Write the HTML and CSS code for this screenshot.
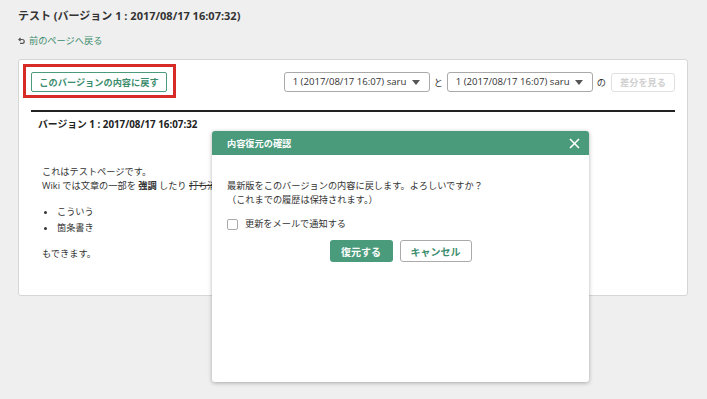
FILE: index.html
```html
<!DOCTYPE html>
<html lang="ja">
  <head>
    <meta charset="UTF-8" />
    <meta name="viewport" content="width=device-width, initial-scale=1.0" />
    <title>テスト (バージョン 1)</title>
    <link rel="stylesheet" href="styles.css">
  </head>
  <body>
    <div class="page">
      <h1 class="page-title">テスト (バージョン 1 : 2017/08/17 16:07:32)</h1>
      <a class="back-link" href="#">
        <svg width="7" height="8" viewBox="0 0 7 8" fill="none" stroke="#555" stroke-width="1.2">
          <polyline points="2.6 0.8 0.9 2.5 2.6 4.2"></polyline>
          <path d="M1 2.5 H4.3 A1.9 1.9 0 0 1 4.3 6.3 H2"></path>
        </svg>
        前のページへ戻る
      </a>

      <div class="panel">
        <div class="toolbar">
          <div class="highlight">
            <button class="btn-outline">このバージョンの内容に戻す</button>
          </div>
          <div class="compare">
            <div class="select">1 (2017/08/17 16:07) saru<span class="caret"></span></div>
            <span class="joiner">と</span>
            <div class="select">1 (2017/08/17 16:07) saru<span class="caret"></span></div>
            <span class="joiner">の</span>
            <button class="btn-disabled" disabled>差分を見る</button>
          </div>
        </div>

        <div class="revision">
          <h2 class="revision-title">バージョン 1 : 2017/08/17 16:07:32</h2>
          <div class="wiki">
            <p>これはテストページです。<br>Wiki では文章の一部を <strong>強調</strong> したり <s>打ち消し</s></p>
            <ul>
              <li>こういう</li>
              <li>箇条書き</li>
            </ul>
            <p>もできます。</p>
          </div>
        </div>
      </div>

      <div class="modal">
        <div class="modal-header">
          <span class="modal-title">内容復元の確認</span>
          <svg class="modal-close" width="11" height="11" viewBox="0 0 11 11" stroke="#fff" stroke-width="1.6">
            <line x1="1" y1="1" x2="10" y2="10"></line>
            <line x1="10" y1="1" x2="1" y2="10"></line>
          </svg>
        </div>
        <div class="modal-body">
          <p class="modal-text">最新版をこのバージョンの内容に戻します。よろしいですか？<br>（これまでの履歴は保持されます。）</p>
          <label class="check-row"><span class="checkbox"></span>更新をメールで通知する</label>
          <div class="modal-actions">
            <button class="btn-primary">復元する</button>
            <button class="btn-cancel">キャンセル</button>
          </div>
        </div>
      </div>
    </div>
  </body>
</html>
```

FILE: styles.css
```css
body {
  margin: 0;
  background-color: #efefef;
  font-family: "Open Sans", "Noto Sans CJK JP", sans-serif;
  font-size: 9.2px;
  color: #333;
}
.page {
  position: relative;
  padding: 8px 19px 0 18px;
  height: 391px;
}
.page-title {
  font-size: 11px;
  font-weight: bold;
  line-height: 16px;
  margin: 0;
  color: #333;
}
.back-link {
  display: flex;
  align-items: center;
  gap: 4px;
  margin-top: 10px;
  line-height: 14px;
  color: #3c8d6e;
  text-decoration: none;
  width: max-content;
}
.panel {
  margin-top: 11px;
  background-color: white;
  border: 1px solid #d6d6d6;
  border-radius: 3px;
  height: 237px;
  padding: 12px 12px 0 12px;
  box-sizing: border-box;
}
.toolbar {
  display: flex;
  justify-content: space-between;
  align-items: center;
  height: 20px;
}
button {
  font-family: inherit;
  font-size: 9.2px;
  font-weight: bold;
  cursor: pointer;
  box-sizing: border-box;
}
.highlight {
  display: flex;
  border: 3px solid #d62b27;
  padding: 5px 6px 3px 5px;
  margin: -8px 0 -6px -8px;
}
.btn-outline {
  height: 20px;
  width: 136px;
  padding: 0;
  background-color: white;
  color: #3c8d6e;
  border: 1.5px solid #4a9b7c;
  border-radius: 2px;
}
.compare {
  display: flex;
  align-items: center;
}
.select {
  position: relative;
  width: 146px;
  height: 20px;
  box-sizing: border-box;
  border: 1px solid #a9a9a9;
  border-radius: 3px;
  padding-left: 8px;
  font-size: 9.6px;
  line-height: 18px;
  color: #333;
}
.caret {
  position: absolute;
  right: 9px;
  top: 7px;
  border-left: 4px solid transparent;
  border-right: 4px solid transparent;
  border-top: 5px solid #555;
}
.joiner {
  margin: 0 4px;
  color: #333;
}
.btn-disabled {
  width: 64px;
  height: 19px;
  margin-left: 1px;
  padding: 0;
  background-color: white;
  color: #d0d0d0;
  border: 1px solid #e0e0e0;
  border-radius: 3px;
  cursor: not-allowed;
}
.revision {
  margin-top: 18px;
  border-top: 2px solid #222;
}
.revision-title {
  margin: 6px 0 0 7px;
  font-size: 9.8px;
  font-weight: bold;
  line-height: 14px;
  color: #222;
}
.wiki {
  padding: 33px 0 0 11px;
  line-height: 14px;
  color: #333;
}
.wiki p {
  margin: 0;
}
.wiki ul {
  margin: 11px 0;
  padding-left: 15px;
  line-height: 16px;
}
.wiki strong {
  font-weight: bold;
}
.modal {
  position: absolute;
  left: 212px;
  top: 131px;
  width: 377px;
  height: 251px;
  background-color: white;
  border-radius: 3px;
  box-shadow: 0 1px 4px rgba(0, 0, 0, 0.3);
  overflow: hidden;
}
.modal-header {
  display: flex;
  justify-content: space-between;
  align-items: center;
  height: 24px;
  padding: 0 9px 0 15px;
  background-color: #4a9b7c;
}
.modal-title {
  color: white;
  font-weight: bold;
}
.modal-body {
  padding: 24px 15px 0 15px;
}
.modal-text {
  margin: 0;
  line-height: 14px;
  color: #333;
}
.check-row {
  display: flex;
  align-items: center;
  gap: 7px;
  margin-top: 10px;
  line-height: 14px;
}
.checkbox {
  width: 11px;
  height: 11px;
  box-sizing: border-box;
  border: 1px solid #aaa;
  border-radius: 2px;
  background-color: white;
}
.modal-actions {
  display: flex;
  justify-content: center;
  gap: 7px;
  margin-top: 9px;
}
.btn-primary {
  width: 63px;
  height: 22px;
  padding: 0;
  font-size: 10px;
  background-color: #4a9b7c;
  color: white;
  border: none;
  border-radius: 3px;
}
.btn-cancel {
  width: 72px;
  height: 22px;
  padding: 0;
  font-size: 10px;
  background-color: white;
  color: #3c8d6e;
  border: 1.5px solid #aaa;
  border-radius: 3px;
}
```
